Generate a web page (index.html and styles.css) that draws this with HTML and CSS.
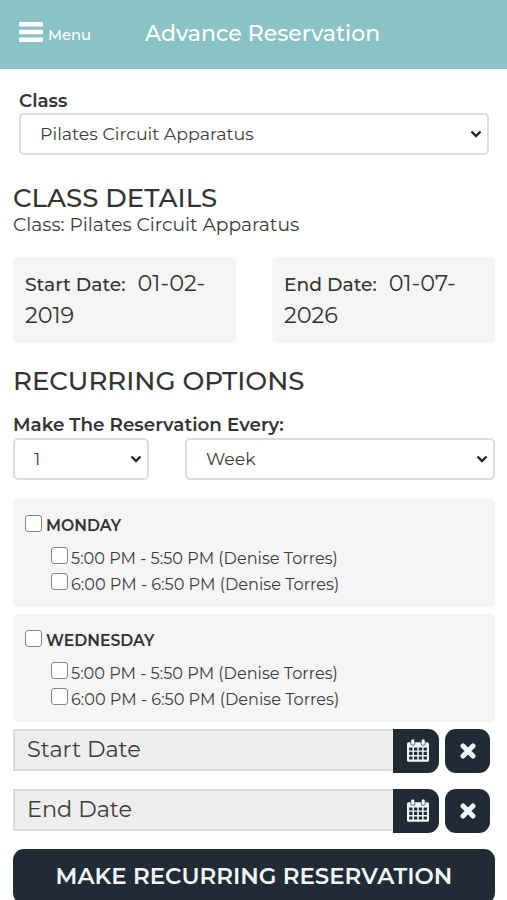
FILE: index.html
```html
<!DOCTYPE html>
<html lang="en">
<head>
    <meta charset="UTF-8">
    <meta name="viewport" content="width=device-width, initial-scale=1.0">
    <title>Advance Reservation</title>
    <link rel="stylesheet" href="styles.css">
</head>
<body>
    <svg class="sprite" width="0" height="0">
        <symbol id="arrow" viewBox="0 0 12 8">
            <path d="M1.5 1.5 L6 6 L10.5 1.5" fill="none" stroke="#222" stroke-width="2.3"/>
        </symbol>
        <symbol id="calendar" viewBox="0 0 22 23">
            <rect x="0" y="3.3" width="22" height="19.5" rx="1.6" fill="#f2f6fa"/>
            <g fill="#f2f6fa" stroke="#202b36" stroke-width="0.7">
                <rect x="3.8" y="0" width="4" height="6.4" rx="1.9"/>
                <rect x="14.2" y="0" width="4" height="6.4" rx="1.9"/>
            </g>
            <path d="M2.2 8.4h3.3v3H2.2z M7 8.4h3.3v3H7z M11.8 8.4h3.3v3h-3.3z M16.6 8.4h3.3v3h-3.3z M2.2 12.8h3.3v3.2H2.2z M7 12.8h3.3v3.2H7z M11.8 12.8h3.3v3.2h-3.3z M16.6 12.8h3.3v3.2h-3.3z M2.2 17.4h3.3v3.2H2.2z M7 17.4h3.3v3.2H7z M11.8 17.4h3.3v3.2h-3.3z M16.6 17.4h3.3v3.2h-3.3z" fill="#202b36"/>
        </symbol>
        <symbol id="times" viewBox="0 0 16 16">
            <path d="M3 3 L13 13 M13 3 L3 13" fill="none" stroke="#f2f6fa" stroke-width="5" stroke-linecap="round"/>
        </symbol>
    </svg>

    <header class="header">
        <div class="menu">
            <svg width="24" height="20" viewBox="0 0 24 20">
                <rect x="0" y="0" width="24" height="4.4" rx="1" fill="#fff"/>
                <rect x="0" y="7.8" width="24" height="4.4" rx="1" fill="#fff"/>
                <rect x="0" y="15.6" width="24" height="4.4" rx="1" fill="#fff"/>
            </svg>
            <span class="menu-text">Menu</span>
        </div>
        <h1>Advance Reservation</h1>
    </header>

    <main class="container">
        <div class="class-group">
            <label class="label-class" for="class">Class</label>
            <div class="select">
                <select id="class"><option>Pilates Circuit Apparatus</option></select>
                <svg class="arrow"><use href="#arrow"/></svg>
            </div>
        </div>

        <h2 class="title-details">CLASS DETAILS</h2>
        <p class="class-name">Class: Pilates Circuit Apparatus</p>

        <div class="dates">
            <div class="date-box"><b>Start Date:</b><span>01-02-<br>2019</span></div>
            <div class="date-box"><b>End Date:</b><span>01-07-<br>2026</span></div>
        </div>

        <h2 class="title-options">RECURRING OPTIONS</h2>
        <label class="label-every" for="every">Make The Reservation Every:</label>
        <div class="every">
            <div class="select">
                <select id="every"><option>1</option></select>
                <svg class="arrow"><use href="#arrow"/></svg>
            </div>
            <div class="select">
                <select id="period"><option>Week</option></select>
                <svg class="arrow"><use href="#arrow"/></svg>
            </div>
        </div>

        <div class="day">
            <label class="day-name"><input type="checkbox">MONDAY</label>
            <label class="time"><input type="checkbox">5:00 PM - 5:50 PM (Denise Torres)</label>
            <label class="time"><input type="checkbox">6:00 PM - 6:50 PM (Denise Torres)</label>
        </div>
        <div class="day">
            <label class="day-name"><input type="checkbox">WEDNESDAY</label>
            <label class="time"><input type="checkbox">5:00 PM - 5:50 PM (Denise Torres)</label>
            <label class="time"><input type="checkbox">6:00 PM - 6:50 PM (Denise Torres)</label>
        </div>

        <div class="picker">
            <div class="picker-input">Start Date</div>
            <button class="btn-calendar"><svg width="22" height="23"><use href="#calendar"/></svg></button>
            <button class="btn-clear"><svg width="16" height="16"><use href="#times"/></svg></button>
        </div>
        <div class="picker">
            <div class="picker-input">End Date</div>
            <button class="btn-calendar"><svg width="22" height="23"><use href="#calendar"/></svg></button>
            <button class="btn-clear"><svg width="16" height="16"><use href="#times"/></svg></button>
        </div>

        <button class="btn-submit">MAKE RECURRING RESERVATION</button>
    </main>
</body>
</html>
```
FILE: styles.css
```css
* {
    box-sizing: border-box;
}

body {
    margin: 0;
    height: 900px;
    overflow: hidden;
    font-family: Montserrat, Inter, sans-serif;
    color: #333;
    background-color: #fff;
}

h1, h2, p {
    margin: 0;
}

.sprite {
    display: block;
}

.header {
    display: flex;
    height: 69px;
    padding: 0 19px;
    background-color: #8ac3c5;
    color: #fff;
}

.menu {
    display: flex;
    width: 126px;
    padding-top: 22px;
}

.menu svg {
    flex: none;
}

.menu-text {
    margin: 3px 0 0 5px;
    font-size: 14.7px;
    font-weight: 500;
    line-height: 20px;
}

h1 {
    font-size: 22px;
    font-weight: 500;
    line-height: 67px;
    white-space: nowrap;
}

.container {
    padding: 0 12px 0 13px;
}

.class-group {
    padding: 20px 6px 0;
}

label {
    display: block;
}

.label-class, .label-every {
    font-size: 18.35px;
    font-weight: 600;
    line-height: 24px;
}

.select {
    position: relative;
    height: 42px;
}

select {
    appearance: none;
    display: block;
    width: 100%;
    height: 100%;
    padding: 0 19px 2px;
    border: 2px solid #dcdddd;
    border-radius: 5px;
    background-color: #fff;
    color: #3c3c3c;
    font-family: inherit;
    font-size: 17.4px;
}

.arrow {
    position: absolute;
    right: 7px;
    top: 17px;
    width: 12px;
    height: 8px;
}

h2 {
    font-size: 26px;
    font-weight: 500;
    line-height: 30px;
    white-space: nowrap;
}

.title-details {
    margin-top: 28px;
}

.class-name {
    font-size: 18.7px;
    line-height: 24px;
    color: #3c3c3c;
}

.dates {
    display: grid;
    grid-template-columns: 223px 223px;
    justify-content: space-between;
    margin-top: 20px;
}

.date-box {
    height: 86px;
    padding: 11px 12px;
    border-radius: 5px;
    background-color: #f5f5f5;
    font-size: 22.4px;
    line-height: 31px;
}

.date-box b {
    margin-right: 12px;
    font-size: 18.7px;
    font-weight: 500;
}

.title-options {
    margin-top: 23px;
}

.label-every {
    margin-top: 17px;
}

.every {
    display: grid;
    grid-template-columns: 136px 310px;
    justify-content: space-between;
    margin-top: 1px;
    margin-bottom: 19px;
}

.day {
    height: 108px;
    margin-bottom: 7px;
    padding: 15px 12px 0;
    border-radius: 5px;
    background-color: #f5f5f5;
}

.day label {
    display: flex;
}

.day-name {
    height: 32px;
    font-size: 15.7px;
    font-weight: 600;
    line-height: 23px;
}

.day .time {
    height: 26px;
    padding-left: 26px;
    font-size: 16.15px;
    line-height: 24px;
    color: #3c3c3c;
}

input[type="checkbox"] {
    appearance: none;
    flex: none;
    width: 17px;
    height: 17px;
    margin: 1px 4px 0 0;
    border: 1px solid #858585;
    border-radius: 3px;
    background-color: #fff;
}

.time input[type="checkbox"] {
    margin-right: 3px;
}

.picker {
    display: flex;
    height: 44px;
    margin-bottom: 16px;
}

.picker-input {
    width: 380px;
    height: 42px;
    padding-left: 12px;
    border: 2px solid #dbdbdb;
    border-right: none;
    background-color: #eee;
    font-size: 22.4px;
    line-height: 36px;
    color: #3c3c3c;
}

button {
    border: none;
    padding: 0;
    background-color: #202b36;
    color: #f2f6fa;
    font-family: inherit;
}

.btn-calendar, .btn-clear {
    display: flex;
    align-items: center;
    justify-content: center;
    width: 46px;
    border-radius: 0 11px 11px 0;
}

.btn-calendar {
    padding: 0 0 2px 3px;
}

.btn-clear {
    width: 45px;
    margin-left: 6px;
    border-radius: 11px;
}

.btn-submit {
    display: block;
    width: 482px;
    height: 55px;
    padding-bottom: 1px;
    border-radius: 11px;
    font-size: 22.9px;
    font-weight: 600;
    white-space: nowrap;
}
```
